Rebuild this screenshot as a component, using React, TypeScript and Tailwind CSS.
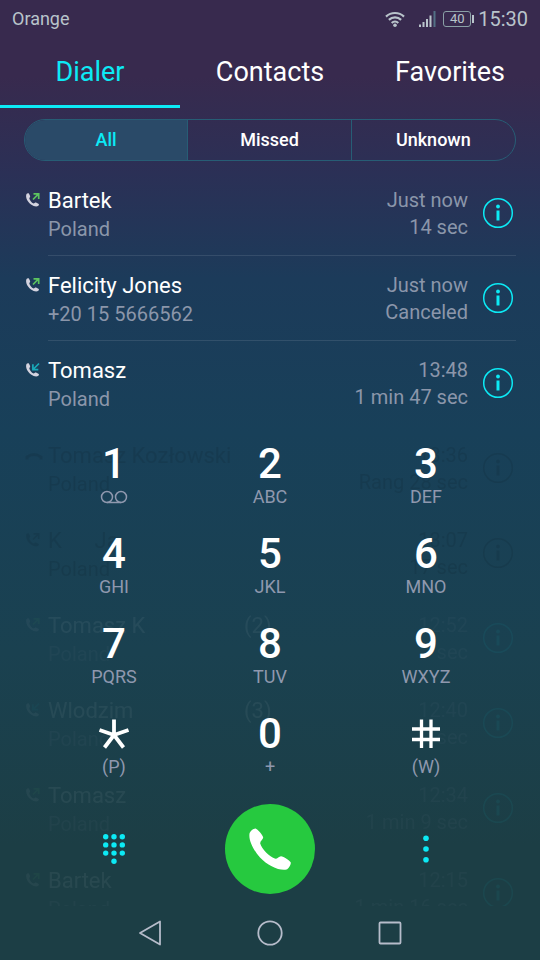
import { useState } from "react";
import clsx from "clsx";

type Direction = "out" | "in" | "missed";

interface Call {
  name: string;
  detail: string;
  time: string;
  length: string;
  direction: Direction;
  count?: string;
  tone?: "dark" | "light";
}

const calls: Call[] = [
  { name: "Bartek", detail: "Poland", time: "Just now", length: "14 sec", direction: "out" },
  { name: "Felicity Jones", detail: "+20 15 5666562", time: "Just now", length: "Canceled", direction: "out" },
  { name: "Tomasz", detail: "Poland", time: "13:48", length: "1 min 47 sec", direction: "in" },
  { name: "Tomasz Kozłowski", detail: "Poland", time: "13:36", length: "Rang 28 sec", direction: "missed", tone: "dark" },
  { name: "K      Ja", detail: "Poland", time: "13:07", length: "17 sec", direction: "out", tone: "dark" },
  { name: "Tomasz K", detail: "Poland", time: "12:52", length: "sec", direction: "out", count: "(2)", tone: "light" },
  { name: "Wlodzim", detail: "Poland", time: "12:40", length: "sec", direction: "in", count: "(3)", tone: "light" },
  { name: "Tomasz", detail: "Poland", time: "12:34", length: "1 min 9 sec", direction: "out", tone: "light" },
  { name: "Bartek", detail: "Poland", time: "12:15", length: "1 min 16 sec", direction: "out", tone: "light" },
];

const keys = [
  ["1", "voicemail"],
  ["2", "ABC"],
  ["3", "DEF"],
  ["4", "GHI"],
  ["5", "JKL"],
  ["6", "MNO"],
  ["7", "PQRS"],
  ["8", "TUV"],
  ["9", "WXYZ"],
  ["*", "(P)"],
  ["0", "+"],
  ["#", "(W)"],
];

const tabs = ["Dialer", "Contacts", "Favorites"];
const filters = ["All", "Missed", "Unknown"];

function StatusBar() {
  return (
    <div className="flex h-[38px] shrink-0 items-center justify-between px-3 text-[#b9c4cb]">
      <span className="text-lg">Orange</span>
      <div className="flex items-center">
        <svg width="20" height="16" viewBox="0 0 20 16" fill="none" stroke="currentColor" strokeWidth="2.200" className="mr-[13px]">
          <path d="M1 5.600a13 13 0 0 1 18 0M3.900 8.900a8.800 8.800 0 0 1 12.200 0M6.700 12a4.800 4.800 0 0 1 6.600 0" />
          <circle cx="10" cy="14.200" r="1.800" fill="currentColor" stroke="none" />
        </svg>
        <svg width="18" height="18" viewBox="0 0 18 18" fill="currentColor" className="mr-[7px]">
          <path d="M1 14.500h2V17H1zM4.500 12h2v5h-2zM8 9h2v8H8zM11.500 5.500h2V17h-2z" />
          <path d="M15.500 1h2v16h-2z" fill="#527085" />
        </svg>
        <span className="flex h-4 w-7 items-center justify-center rounded-[3px] border border-[#8aa0a6] text-[13px]">40</span>
        <span className="mr-1 ml-px h-2 w-[2px] bg-current" />
        <span className="text-xl">15:30</span>
      </div>
    </div>
  );
}

function CallIcon({ direction }: { direction: Direction }) {
  if (direction === "missed") {
    return (
      <svg width="18" height="16" viewBox="0 0 18 16" fill="none" stroke="#d9d9e3" strokeWidth="3">
        <path d="M2 12.500V10q7-5 14 0v2.500" />
      </svg>
    );
  }
  return (
    <svg width="16" height="16" viewBox="0 0 16 16" fill="none">
      <path
        d="M1.500 2.100C2.100 1.100 3.300.8 3.900 1.600L5.100 3.900C5.500 4.700 4.500 5.400 4.300 6.200C4.600 8.300 6.500 10.700 8.600 11.400C9.500 11.300 10 10.300 11 10.600L13.400 11.700C14.400 12.300 13.900 13.500 13 14.100C11.500 15 8.600 14.500 6 12.600C2.700 10.200.1 5.600 1.500 2.100Z"
        fill="#d4d3df"
      />
      {direction === "out" ? (
        <path d="M8 7.500L13.300 2.200M8.500 1.800H13.700V7" stroke="#5cc45f" strokeWidth="1.700" />
      ) : (
        <path d="M14 1.500L8.500 7M7.900 2.200V7.600H13.300" stroke="#19a9b8" strokeWidth="1.700" />
      )}
    </svg>
  );
}

function InfoIcon() {
  return (
    <svg width="32" height="32" viewBox="0 0 32 32" fill="none">
      <circle cx="16" cy="16" r="14.300" stroke="#0ceaf5" strokeWidth="1.500" />
      <circle cx="16" cy="9.500" r="1.900" fill="#0ceaf5" />
      <path d="M16 13.500V23.500" stroke="#0ceaf5" strokeWidth="3" />
    </svg>
  );
}

function CallRow({ call, divider }: { call: Call; divider: boolean }) {
  return (
    <li
      className={clsx(
        "flex h-[85px] shrink-0 pl-6",
        call.tone === "dark" && "opacity-8 brightness-0",
        call.tone === "light" && "opacity-5"
      )}
    >
      <div className="w-6 pt-[21px] pl-px">
        <CallIcon direction={call.direction} />
      </div>
      <div className={clsx("mr-6 flex flex-1 border-b", divider ? "border-white/10" : "border-transparent")}>
        <div className="w-[196px] pt-4">
          <div className="text-[22px] leading-7 whitespace-pre text-white">{call.name}</div>
          <div className="text-xl leading-7 text-[#8b96aa]">{call.detail}</div>
        </div>
        {call.count && <div className="pt-4 text-[22px] leading-7 text-white">{call.count}</div>}
        <div className="ml-auto flex gap-[14px]">
          <div className="pt-4 text-right text-xl leading-[27px] text-[#8b96aa]">
            <div>{call.time}</div>
            <div>{call.length}</div>
          </div>
          <button aria-label={"Details for " + call.name} className="mr-[2px] self-center">
            <InfoIcon />
          </button>
        </div>
      </div>
    </li>
  );
}

function KeySymbol({ value }: { value: string }) {
  if (value === "*") {
    return (
      <svg width="32" height="32" viewBox="0 0 32 32" stroke="white" strokeWidth="3.800" fill="none">
        <path d="M16 17V1.500M16 17L1.500 12M16 17L30.500 12M16 17L6.500 29.500M16 17L25.500 29.500" />
      </svg>
    );
  }
  if (value === "#") {
    return (
      <svg width="32" height="32" viewBox="0 0 32 32" stroke="white" strokeWidth="3.300" fill="none">
        <path d="M11.500 1.500V30M21 1.500V30M2 11H30M2 21.500H30" />
      </svg>
    );
  }
  return <>{value}</>;
}

function Keypad() {
  return (
    <div className="z-10 self-end px-9 [grid-area:1/1]">
      <div className="grid grid-cols-3">
        {keys.map(([value, letters]) => (
          <button key={value} aria-label={value} className="flex h-[90px] flex-col items-center pt-[6px]">
            <span className="flex h-[46px] items-center text-[42px] leading-none font-medium text-white">
              <KeySymbol value={value} />
            </span>
            <span className="flex h-5 items-center text-lg leading-5 text-[#8f98ae]">
              {letters === "voicemail" ? (
                <svg width="28" height="14" viewBox="0 0 28 14" fill="none" stroke="currentColor" strokeWidth="1.500">
                  <circle cx="7" cy="7" r="5.500" />
                  <circle cx="21" cy="7" r="5.500" />
                  <path d="M7 12.500H21" />
                </svg>
              ) : (
                letters
              )}
            </span>
          </button>
        ))}
      </div>
      <div className="grid h-[111px] grid-cols-3 justify-items-center pt-[9px]">
        <button aria-label="Hide keypad" className="h-[90px] px-4">
          <svg width="24" height="32" viewBox="0 0 24 32" fill="#0ceaf5">
            {[3.7, 12, 20.3].map((x) =>
              [3.7, 11.9, 20.1].map((y) => <circle key={x + "-" + y} cx={x} cy={y} r="2.700" />)
            )}
            <circle cx="12" cy="28.300" r="2.700" />
          </svg>
        </button>
        <button aria-label="Call" className="flex size-[90px] items-center justify-center rounded-full bg-[#26c93f]">
          <svg width="44" height="44" viewBox="0 0 44 44" fill="white">
            <path d="M1.500 6.500C2 4.500 5 1.600 7.500 1.500C9.500 1.800 15 8.500 15.200 10.500C15.300 12.500 12 14 12.200 16.500C14 22.500 21 29.500 27.500 31.800C29.500 31.800 31 29.300 33 29.200C35.500 29.500 42 33.500 42.800 35.500C43 38 40.500 41.800 38.500 42.600C31 44 19.500 38.500 12 30.500C5 22.500.5 13 1.500 6.500Z" />
          </svg>
        </button>
        <button aria-label="More options" className="h-[90px] px-4">
          <svg width="8" height="28" viewBox="0 0 8 28" fill="#0ceaf5">
            <circle cx="4" cy="3.200" r="2.800" />
            <circle cx="4" cy="14" r="2.800" />
            <circle cx="4" cy="24.800" r="2.800" />
          </svg>
        </button>
      </div>
    </div>
  );
}

function NavBar() {
  return (
    <div className="flex h-[54px] shrink-0 items-center justify-center gap-[92px] text-[#b6bcca]">
      <button aria-label="Back">
        <svg width="28" height="28" viewBox="0 0 28 28" fill="none" stroke="currentColor" strokeWidth="1.800" strokeLinejoin="round">
          <path d="M24 2.500V25.500L4 14Z" />
        </svg>
      </button>
      <button aria-label="Home">
        <svg width="28" height="28" viewBox="0 0 28 28" fill="none" stroke="currentColor" strokeWidth="1.800">
          <circle cx="14" cy="14" r="11.700" />
        </svg>
      </button>
      <button aria-label="Recent apps">
        <svg width="28" height="28" viewBox="0 0 28 28" fill="none" stroke="currentColor" strokeWidth="1.800">
          <rect x="3.500" y="3.500" width="21" height="21" rx="1" />
        </svg>
      </button>
    </div>
  );
}

export default function App() {
  const [tab, setTab] = useState("Dialer");
  const [filter, setFilter] = useState("All");

  return (
    <div className="flex h-screen flex-col bg-[linear-gradient(to_bottom,#382a4e_8%,#2b3056_18%,#1c3b5a_29%,#184059_45%,#1a4150_68%,#1c3e45_88%)] font-[Roboto,sans-serif]">
      <StatusBar />
      <nav className="grid h-[70px] shrink-0 grid-cols-3">
        {tabs.map((name) => (
          <button
            key={name}
            onClick={() => setTab(name)}
            className={clsx("border-b-3 pt-[2px] text-[27px]", tab === name ? "border-[#0ceaf5] text-[#0ceaf5]" : "border-transparent text-white")}
          >
            {name}
          </button>
        ))}
      </nav>
      <div className="mx-6 mt-[11px] mb-[10px] grid h-[42px] shrink-0 grid-cols-3 divide-x divide-[#275d75] overflow-hidden rounded-full border border-[#275d75]">
        {filters.map((name) => (
          <button
            key={name}
            onClick={() => setFilter(name)}
            className={clsx("text-lg font-medium", filter === name ? "bg-[#2a4a68] text-[#0ceaf5]" : "text-white")}
          >
            {name}
          </button>
        ))}
      </div>
      <main className="grid min-h-0 flex-1 grid-rows-[minmax(0,1fr)]">
        <ul className="flex flex-col overflow-hidden [grid-area:1/1]">
          {calls.map((call, i) => (
            <CallRow key={call.time + call.length} call={call} divider={i < 2} />
          ))}
        </ul>
        <Keypad />
      </main>
      <NavBar />
    </div>
  );
}
